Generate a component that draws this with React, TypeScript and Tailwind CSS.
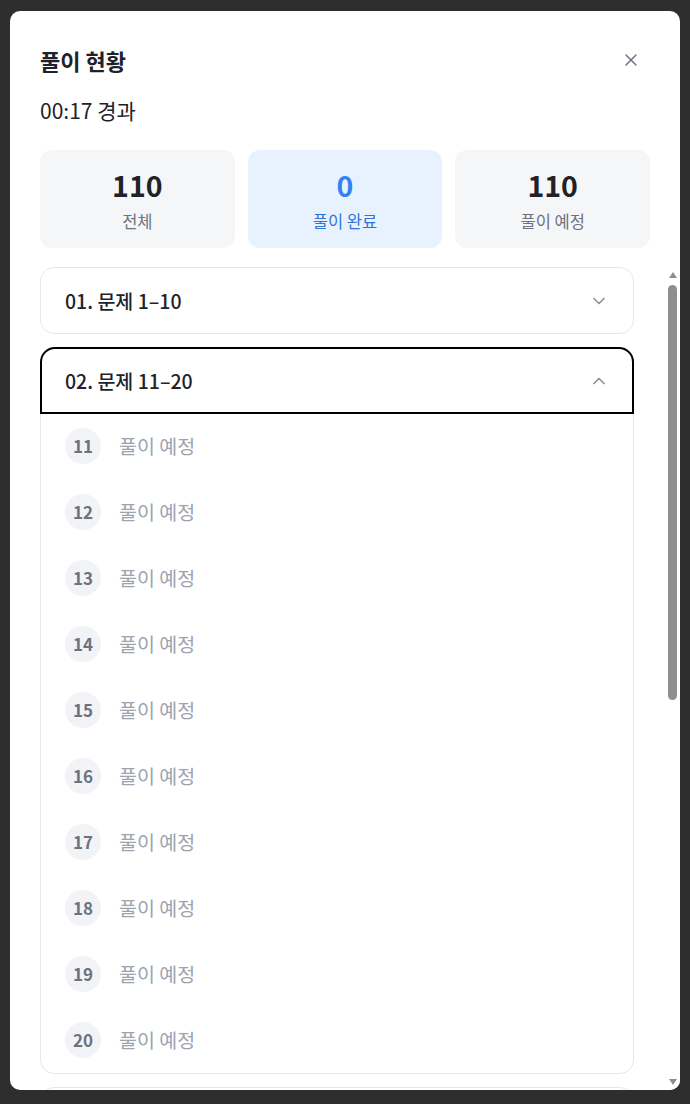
import { ChevronDown, ChevronUp, X } from 'lucide-react';

const FONT = { fontFamily: '"Noto Sans CJK KR", "Noto Sans", sans-serif' };

type Stat = { value: number; label: string; active?: boolean };

const STATS: Stat[] = [
  { value: 110, label: '전체' },
  { value: 0, label: '풀이 완료', active: true },
  { value: 110, label: '풀이 예정' },
];

const OPEN_ROWS = [11, 12, 13, 14, 15, 16, 17, 18, 19, 20];

function StatCard({ stat }: { stat: Stat }) {
  return (
    <div
      className={
        stat.active
          ? 'h-[98px] rounded-[12px] bg-[#e8f2fe] flex flex-col items-center pt-[19px]'
          : 'h-[98px] rounded-[12px] bg-[#f5f6f8] flex flex-col items-center pt-[19px]'
      }
    >
      <span
        className={
          stat.active
            ? 'text-[28.5px] leading-[32px] font-semibold text-[#3182f6]'
            : 'text-[28.5px] leading-[32px] font-semibold text-[#1f2329]'
        }
      >
        {stat.value}
      </span>
      <span
        className={
          stat.active
            ? 'mt-[9px] text-[16.5px] leading-[22px] text-[#2f73d9]'
            : 'mt-[9px] text-[16.5px] leading-[22px] text-[#6b7280]'
        }
      >
        {stat.label}
      </span>
    </div>
  );
}

function ClosedSection({ title }: { title?: string }) {
  return (
    <div className="rounded-[14px] border border-[#e5e7eb] bg-white">
      <div className="h-[65px] flex items-center justify-between pl-6 pr-6">
        <span className="text-[19.5px] font-medium text-[#1f2329]">{title}</span>
        <ChevronDown className="w-5 h-5 text-[#8b919c]" strokeWidth={2} />
      </div>
    </div>
  );
}

function ProblemRow({ n }: { n: number }) {
  return (
    <div className="h-[66px] flex items-center pl-6 gap-[18px]">
      <span className="w-9 h-9 rounded-full bg-[#f2f3f6] flex items-center justify-center text-[17px] font-semibold text-[#6b7280]">
        {n}
      </span>
      <span className="text-[19.5px] text-[#9ca3af]">풀이 예정</span>
    </div>
  );
}

function OpenSection({ title }: { title: string }) {
  return (
    <div className="rounded-[14px] border border-[#e5e7eb] bg-white">
      <div className="h-[65px] flex items-center justify-between pl-6 pr-6 rounded-t-[14px] outline-2 outline-black outline-offset-[-1px]">
        <span className="text-[19.5px] font-medium text-[#1f2329]">{title}</span>
        <ChevronUp className="w-5 h-5 text-[#8b919c]" strokeWidth={2} />
      </div>
      {OPEN_ROWS.map((n) => (
        <ProblemRow key={n} n={n} />
      ))}
    </div>
  );
}

function FakeScrollbar() {
  return (
    <div className="w-[15px] flex flex-col items-center bg-white">
      <svg width="8" height="6" viewBox="0 0 8 6" className="mt-[6px]">
        <path d="M4 0 L8 6 L0 6 Z" fill="#8e8e8e" />
      </svg>
      <div className="mt-[7px] w-[9px] h-[415px] rounded-full bg-[#8e8e8e]" />
      <div className="flex-1" />
      <svg width="8" height="6" viewBox="0 0 8 6" className="mb-[5px]">
        <path d="M0 0 L8 0 L4 6 Z" fill="#8e8e8e" />
      </svg>
    </div>
  );
}

export default function App() {
  return (
    <div className="w-[690px] h-[1104px] bg-[#2e2e2e] pt-[11px] pl-[10px] overflow-hidden" style={FONT}>
      <div className="w-[670px] h-[1079px] bg-white rounded-[10px] flex flex-col overflow-hidden">
        <div className="px-[30px] pt-[31px]">
          <div className="flex items-center justify-between">
            <h2 className="text-[22px] leading-[36px] font-bold text-[#1f2329]">풀이 현황</h2>
            <button className="w-8 h-8 mr-[3px] flex items-center justify-center text-[#6b7280]">
              <X className="w-5 h-5" strokeWidth={1.75} />
            </button>
          </div>
          <p className="mt-[18px] text-[21px] leading-[28px] text-[#1f2329]">00:17 경과</p>
          <div className="mt-[26px] grid grid-cols-3 gap-[13px]">
            {STATS.map((s) => (
              <StatCard key={s.label} stat={s} />
            ))}
          </div>
        </div>
        <div className="mt-[18px] flex-1 min-h-0 flex">
          <div className="flex-1 min-w-0 overflow-hidden pl-[30px] pr-[31px] pt-px flex flex-col gap-[13px]">
            <ClosedSection title="01. 문제 1–10" />
            <OpenSection title="02. 문제 11–20" />
            <ClosedSection />
          </div>
          <FakeScrollbar />
        </div>
      </div>
    </div>
  );
}
